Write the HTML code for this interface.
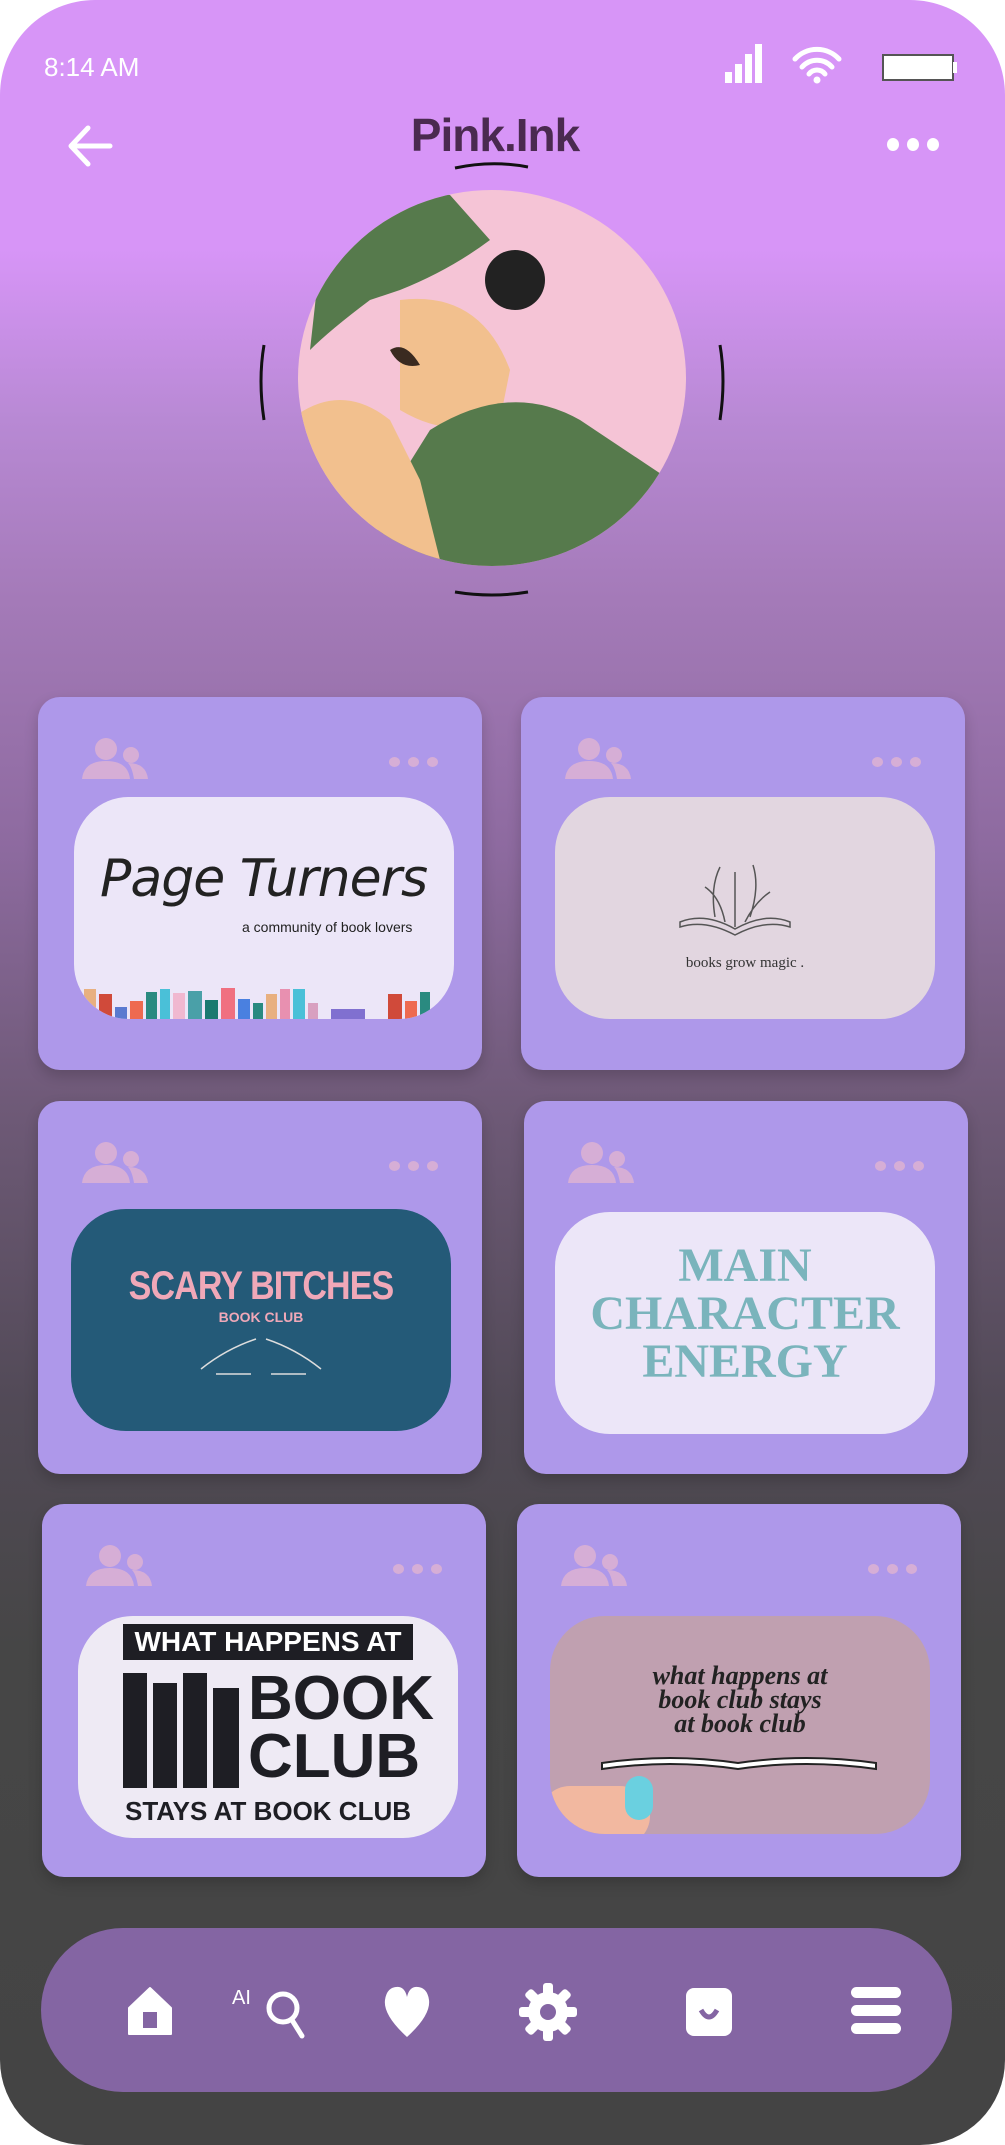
<!DOCTYPE html>
<html><head><meta charset="utf-8"><style>
*{margin:0;padding:0;box-sizing:border-box}
body{width:1005px;height:2145px;background:#fff;position:relative;overflow:hidden;font-family:"Liberation Sans",sans-serif}
.phone{position:absolute;left:0;top:0;width:1005px;height:2145px;border-radius:95px 95px 85px 85px;overflow:hidden;
background:linear-gradient(#d795f7 0px,#d795f7 250px,#b889d4 420px,#a47ab8 600px,#8d6a9f 850px,#6f5a78 1100px,#524a57 1400px,#464646 1650px,#444 2145px)}
.abs{position:absolute}
.card{position:absolute;width:444px;height:373px;background:#ae98ea;border-radius:22px;box-shadow:0 6px 14px rgba(0,0,0,.18)}
.ppl{position:absolute;left:44px;top:40px;width:66px;height:42px}
.dots{position:absolute;right:44px;top:60px;display:flex;gap:8px}
.dots i{width:11px;height:10px;border-radius:50%;background:#d6aed6;display:block}
.inner{position:absolute;width:380px;height:222px;border-radius:55px;overflow:hidden}
</style></head><body>
<div class="phone">
<div class="abs" style="left:44px;top:52px;color:#fff;font-size:26px">8:14 AM</div>
<svg class="abs" style="left:722px;top:42px" width="240" height="42">
<rect x="3" y="30" width="7" height="11" fill="#fff"/><rect x="13" y="22" width="7" height="19" fill="#fff"/><rect x="23" y="12" width="7" height="29" fill="#fff"/><rect x="33" y="2" width="7" height="39" fill="#fff"/>
<path d="M73 17 a30 30 0 0 1 44 0 M80 25 a20 20 0 0 1 30 0 M87 32 a10 10 0 0 1 16 0" stroke="#fff" stroke-width="5" fill="none" stroke-linecap="round"/><circle cx="95" cy="38" r="3.5" fill="#fff"/>
<rect x="161" y="13" width="70" height="25" fill="#fff" stroke="#555" stroke-width="2"/><rect x="231" y="20" width="4" height="11" fill="#fff"/>
</svg>
<svg class="abs" style="left:66px;top:122px" width="50" height="50"><path d="M44 24 H6 M22 6 L5 24 L22 42" stroke="#fff" stroke-width="5" fill="none" stroke-linecap="round" stroke-linejoin="round"/></svg>
<div class="abs" style="left:395px;top:108px;width:200px;text-align:center;font-size:46px;font-weight:bold;color:#4a2a50;letter-spacing:-1px">Pink.Ink</div>
<svg class="abs" style="left:450px;top:158px" width="90" height="14"><path d="M5 10 Q42 2 78 9" stroke="#111" stroke-width="3" fill="none"/></svg>
<div class="abs" style="left:887px;top:138px;display:flex;gap:8px"><i style="width:12px;height:13px;background:#fff;border-radius:50%;display:block"></i><i style="width:12px;height:13px;background:#fff;border-radius:50%;display:block"></i><i style="width:12px;height:13px;background:#fff;border-radius:50%;display:block"></i></div>
<svg class="abs" style="left:250px;top:180px" width="490" height="420">
<path d="M14 165 Q8 200 14 240" stroke="#111" stroke-width="3" fill="none"/>
<path d="M470 165 Q476 200 470 240" stroke="#111" stroke-width="3" fill="none"/>
<path d="M205 412 Q242 418 278 412" stroke="#111" stroke-width="3" fill="none"/>
<defs><clipPath id="c"><ellipse cx="242" cy="198" rx="194" ry="188"/></clipPath></defs>
<ellipse cx="242" cy="198" rx="194" ry="188" fill="#f5c4d6"/>
<g clip-path="url(#c)">
<path d="M150 120 Q230 110 260 190 L250 240 Q200 260 150 230 Z" fill="#f2c08e"/>
<path d="M130 330 L180 250 Q260 200 330 240 L420 300 L420 420 L120 420 Z" fill="#567a4c"/>
<path d="M40 240 Q90 200 140 240 L170 300 L200 420 L60 420 Q20 330 40 240 Z" fill="#f2c08e"/>
<circle cx="265" cy="100" r="30" fill="#222"/>
<path d="M60 170 L70 80 Q120 0 200 15 L240 60 Q200 90 150 110 L120 120 Q80 150 60 170 Z" fill="#567a4c"/>
<path d="M140 170 Q155 160 170 185 Q150 190 140 170Z" fill="#3a2a20"/>
</g>
</svg>

<!-- row1 -->
<div class="card" style="left:38px;top:697px">
<svg class="ppl" viewBox="0 0 66 42"><circle cx="24" cy="12" r="11" fill="#d6aed6"/><circle cx="49" cy="18" r="8" fill="#d6aed6"/><path d="M0 42 Q2 24 24 24 Q46 24 48 42Z M46 26 Q64 26 66 42 H52 Q50 30 46 26Z" fill="#d6aed6"/></svg>
<div class="dots"><i></i><i></i><i></i></div>
<div class="inner" style="left:36px;top:100px;background:#ece6f8">
<div class="abs" style="left:26px;top:52px;font-size:52px;white-space:nowrap;font-family:'DejaVu Sans',sans-serif;font-weight:200;font-style:italic;color:#222;letter-spacing:-1px">Page Turners</div>
<div class="abs" style="left:168px;top:122px;font-size:14px;color:#222;white-space:nowrap">a community of book lovers</div>
<div class="abs" style="left:10px;bottom:0;display:flex;gap:3px;align-items:flex-end">
<i style="width:12px;height:30px;background:#e8b080;display:block"></i><i style="width:13px;height:25px;background:#d04a3a;display:block"></i><i style="width:12px;height:12px;background:#5a7ad0;display:block"></i><i style="width:13px;height:18px;background:#ee6a50;display:block"></i><i style="width:11px;height:27px;background:#2a8a80;display:block"></i><i style="width:10px;height:30px;background:#4ac0d8;display:block"></i><i style="width:12px;height:26px;background:#f0b8d0;display:block"></i><i style="width:14px;height:28px;background:#4aa0a8;display:block"></i><i style="width:13px;height:19px;background:#1a7a70;display:block"></i><i style="width:14px;height:31px;background:#f07080;display:block"></i><i style="width:12px;height:20px;background:#4a80e0;display:block"></i><i style="width:10px;height:16px;background:#2a8a80;display:block"></i><i style="width:11px;height:25px;background:#e8b080;display:block"></i><i style="width:10px;height:30px;background:#e890b0;display:block"></i><i style="width:12px;height:30px;background:#4ac0d8;display:block"></i><i style="width:10px;height:16px;background:#d8a0c0;display:block"></i><i style="width:34px;height:10px;background:#8070d0;margin-left:10px;display:block"></i><i style="width:14px;height:25px;background:#d04a3a;margin-left:20px;display:block"></i><i style="width:12px;height:18px;background:#ee6a50;display:block"></i><i style="width:10px;height:27px;background:#2a8a80;display:block"></i></div>
</div></div>
<div class="card" style="left:521px;top:697px">
<svg class="ppl" viewBox="0 0 66 42"><circle cx="24" cy="12" r="11" fill="#d6aed6"/><circle cx="49" cy="18" r="8" fill="#d6aed6"/><path d="M0 42 Q2 24 24 24 Q46 24 48 42Z M46 26 Q64 26 66 42 H52 Q50 30 46 26Z" fill="#d6aed6"/></svg>
<div class="dots"><i></i><i></i><i></i></div>
<div class="inner" style="left:34px;top:100px;background:#e2d6e0">
<svg class="abs" style="left:120px;top:60px" width="120" height="100"><path d="M5 65 Q30 55 60 72 Q90 55 115 65 L115 70 Q90 62 60 78 Q30 62 5 70Z" fill="none" stroke="#555" stroke-width="1.5"/><path d="M40 60 Q35 30 45 10 M60 70 V15 M75 60 Q85 30 78 8 M50 65 Q45 40 30 30 M70 65 Q80 45 95 35" stroke="#555" stroke-width="1.5" fill="none"/></svg>
<div class="abs" style="left:0;width:380px;top:158px;text-align:center;font-family:'Liberation Serif',serif;font-size:15px;color:#333">books grow magic .</div>
</div></div>
<!-- row2 -->
<div class="card" style="left:38px;top:1101px">
<svg class="ppl" viewBox="0 0 66 42"><circle cx="24" cy="12" r="11" fill="#d6aed6"/><circle cx="49" cy="18" r="8" fill="#d6aed6"/><path d="M0 42 Q2 24 24 24 Q46 24 48 42Z M46 26 Q64 26 66 42 H52 Q50 30 46 26Z" fill="#d6aed6"/></svg>
<div class="dots"><i></i><i></i><i></i></div>
<div class="inner" style="left:33px;top:108px;background:#245a78">
<div class="abs" style="left:0;width:380px;top:55px;text-align:center;font-size:40px;font-weight:bold;color:#f0a8b8;letter-spacing:-1px;transform:scaleX(.85)">SCARY BITCHES</div>
<div class="abs" style="left:0;width:380px;top:100px;text-align:center;font-size:14px;font-weight:bold;color:#f0a8b8">BOOK CLUB</div>
<svg class="abs" style="left:125px;top:120px" width="130" height="50"><path d="M5 40 Q30 20 60 10 M125 40 Q100 20 70 10 M20 45 H55 M75 45 H110" stroke="#ddd" stroke-width="1.5" fill="none"/></svg>
</div></div>
<div class="card" style="left:524px;top:1101px">
<svg class="ppl" viewBox="0 0 66 42"><circle cx="24" cy="12" r="11" fill="#d6aed6"/><circle cx="49" cy="18" r="8" fill="#d6aed6"/><path d="M0 42 Q2 24 24 24 Q46 24 48 42Z M46 26 Q64 26 66 42 H52 Q50 30 46 26Z" fill="#d6aed6"/></svg>
<div class="dots"><i></i><i></i><i></i></div>
<div class="inner" style="left:31px;top:111px;background:#ece6f8">
<div class="abs" style="left:0;width:380px;top:30px;text-align:center;font-size:48px;font-weight:bold;line-height:48px;color:#7ab4bc;font-family:'Liberation Serif',serif">MAIN<br>CHARACTER<br>ENERGY</div>
</div></div>
<!-- row3 -->
<div class="card" style="left:42px;top:1504px">
<svg class="ppl" viewBox="0 0 66 42"><circle cx="24" cy="12" r="11" fill="#d6aed6"/><circle cx="49" cy="18" r="8" fill="#d6aed6"/><path d="M0 42 Q2 24 24 24 Q46 24 48 42Z M46 26 Q64 26 66 42 H52 Q50 30 46 26Z" fill="#d6aed6"/></svg>
<div class="dots"><i></i><i></i><i></i></div>
<div class="inner" style="left:36px;top:112px;background:#eeeaf4">
<div class="abs" style="left:45px;top:8px;width:290px;height:36px;background:#1e1e24;color:#fff;font-size:28px;font-weight:bold;text-align:center;line-height:36px">WHAT HAPPENS AT</div>
<div class="abs" style="left:45px;top:52px;width:120px;height:120px;display:flex;gap:6px;align-items:flex-end"><i style="width:24px;height:115px;background:#1e1e24;display:block"></i><i style="width:24px;height:105px;background:#1e1e24;display:block"></i><i style="width:24px;height:115px;background:#1e1e24;display:block"></i><i style="width:26px;height:100px;background:#1e1e24;display:block"></i></div>
<div class="abs" style="left:170px;top:54px;font-size:62px;font-weight:bold;line-height:58px;color:#1e1e24">BOOK<br>CLUB</div>
<div class="abs" style="left:0;width:380px;top:180px;text-align:center;font-size:26px;font-weight:bold;color:#1e1e24">STAYS AT BOOK CLUB</div>
</div></div>
<div class="card" style="left:517px;top:1504px">
<svg class="ppl" viewBox="0 0 66 42"><circle cx="24" cy="12" r="11" fill="#d6aed6"/><circle cx="49" cy="18" r="8" fill="#d6aed6"/><path d="M0 42 Q2 24 24 24 Q46 24 48 42Z M46 26 Q64 26 66 42 H52 Q50 30 46 26Z" fill="#d6aed6"/></svg>
<div class="dots"><i></i><i></i><i></i></div>
<div class="inner" style="left:33px;top:112px;background:#c0a0b0;height:218px">
<div class="abs" style="left:0;width:380px;top:48px;text-align:center;font-size:26px;line-height:24px;font-weight:bold;color:#222;font-family:'Liberation Serif',serif;font-style:italic">what happens at<br>book club stays<br>at book club</div>
<svg class="abs" style="left:50px;top:125px" width="280" height="30"><path d="M2 22 Q70 12 138 22 Q206 12 276 22 L276 28 Q206 18 138 28 Q70 18 2 28Z" fill="#fff" stroke="#222" stroke-width="2"/></svg>
<div class="abs" style="left:-10px;top:170px;width:110px;height:60px;background:#f2b8a0;border-radius:30px"></div>
<div class="abs" style="left:75px;top:160px;width:28px;height:44px;background:#6ad0e0;border-radius:14px"></div>
</div></div>

<!-- nav -->
<div class="abs" style="left:41px;top:1928px;width:911px;height:164px;border-radius:82px;background:#8465a3"></div>
<svg class="abs" style="left:41px;top:1928px" width="911" height="164">
<path d="M88 80 L109 60 L130 80 V106 H88Z" fill="#fff" stroke="#fff" stroke-width="2" stroke-linejoin="round"/><rect x="102" y="84" width="14" height="16" fill="#8465a3"/>
<text x="191" y="76" font-size="20" fill="#fff" font-family="Liberation Sans">AI</text>
<circle cx="242" cy="80" r="14" stroke="#fff" stroke-width="5" fill="none"/><path d="M251 92 L261 108" stroke="#fff" stroke-width="5" stroke-linecap="round"/>
<path d="M366 109 Q342 87 344 72 Q346 58 358 59 Q364 60 366 69 Q368 60 374 59 Q386 58 388 72 Q390 87 366 109Z" fill="#fff"/>
<g transform="translate(507,84)"><circle r="20" fill="#fff"/><g fill="#fff"><rect x="-5" y="-29" width="10" height="58" rx="3"/><rect x="-5" y="-29" width="10" height="58" rx="3" transform="rotate(45)"/><rect x="-5" y="-29" width="10" height="58" rx="3" transform="rotate(90)"/><rect x="-5" y="-29" width="10" height="58" rx="3" transform="rotate(135)"/></g><circle r="8" fill="#8465a3"/></g>
<rect x="645" y="60" width="46" height="48" rx="8" fill="#fff"/><path d="M660 82 Q668 96 676 82" stroke="#8465a3" stroke-width="5" fill="none"/>
<rect x="810" y="59" width="50" height="11" rx="5.5" fill="#fff"/><rect x="810" y="77" width="50" height="11" rx="5.5" fill="#fff"/><rect x="810" y="95" width="50" height="11" rx="5.5" fill="#fff"/>
</svg>
</div>
</body></html>
